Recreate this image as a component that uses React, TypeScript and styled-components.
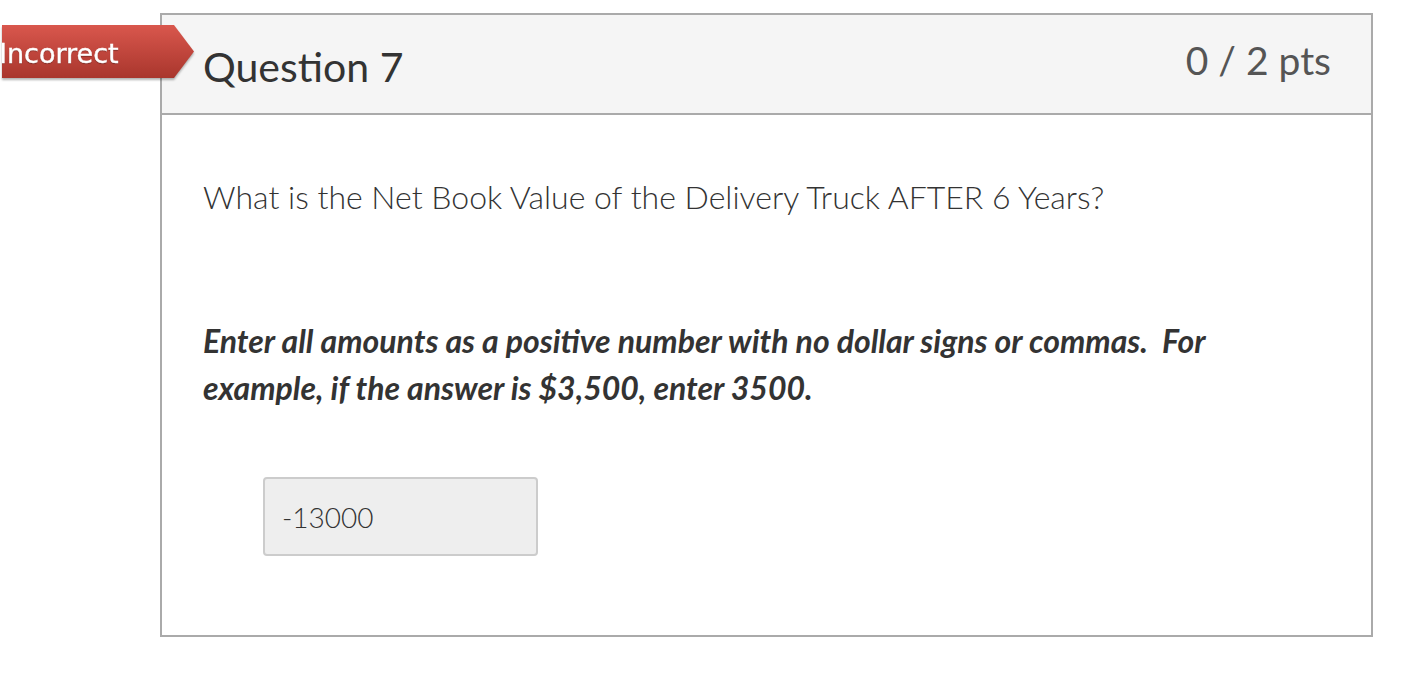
import React from "react";
import styled, { createGlobalStyle } from "styled-components";

const GlobalStyle = createGlobalStyle`
  html, body {
    margin: 0;
    padding: 0;
    background: #fff;
  }
  body {
    font-family: Lato, "Noto Sans", sans-serif;
    color: #333;
  }
`;

const Page = styled.div`
  padding: 13px 0 0 160px;
`;

const Card = styled.div`
  position: relative;
  width: 1213px;
  box-sizing: border-box;
  border: 2px solid #aaa;
`;

const RibbonShadow = styled.div`
  position: absolute;
  left: -160px;
  top: 10px;
  filter: drop-shadow(0 2px 1px rgba(0, 0, 0, 0.3));
`;

const Ribbon = styled.div`
  width: 192px;
  height: 53px;
  box-sizing: border-box;
  display: flex;
  align-items: center;
  padding-top: 3px;
  background: linear-gradient(#d9574d, #a9362d);
  clip-path: polygon(0 0, 172px 0, 100% 50%, 172px 100%, 0 100%);
  color: #fff;
  font-family: "DejaVu Sans", Verdana, sans-serif;
  font-size: 27px;
  text-indent: -3px;
  -webkit-text-stroke: 0.4px #fff;
  text-shadow: 0 1px 1px rgba(0, 0, 0, 0.35);
`;

const Header = styled.div`
  height: 100px;
  box-sizing: border-box;
  display: flex;
  justify-content: space-between;
  align-items: flex-start;
  padding: 0 40px 0 41px;
  background: #f5f5f5;
  border-bottom: 2px solid #aaa;
`;

const Title = styled.h2`
  margin: 27px 0 0;
  font-size: 41px;
  font-weight: 400;
  color: #333;
`;

const Points = styled.div`
  margin-top: 22px;
  font-size: 39px;
  font-weight: 400;
  color: #555;
`;

const Body = styled.div`
  padding: 60px 41px 79px;
`;

const Question = styled.p`
  margin: 0 0 98px;
  font-size: 32px;
  font-weight: 300;
  line-height: 44px;
`;

const Note = styled.p`
  margin: 0 0 66px;
  font-size: 32px;
  font-weight: 700;
  font-style: italic;
  line-height: 47px;
  white-space: pre-wrap;
  max-width: 1080px;
`;

const AnswerBox = styled.div`
  width: 275px;
  height: 79px;
  box-sizing: border-box;
  margin-left: 60px;
  display: flex;
  align-items: center;
  padding-left: 17px;
  background: #eee;
  border: 2px solid #ccc;
  border-radius: 4px;
  font-size: 28px;
  font-weight: 300;
  color: #333;
`;

export default function App() {
  return (
    <>
      <GlobalStyle />
      <Page>
        <Card>
          <RibbonShadow>
            <Ribbon>Incorrect</Ribbon>
          </RibbonShadow>
          <Header>
            <Title>Question 7</Title>
            <Points>0 / 2 pts</Points>
          </Header>
          <Body>
            <Question>What is the Net Book Value of the Delivery Truck AFTER 6 Years?</Question>
            <Note>
              {"Enter all amounts as a positive number with no dollar signs or commas.  For example, if the answer is $3,500, enter 3500."}
            </Note>
            <AnswerBox>-13000</AnswerBox>
          </Body>
        </Card>
      </Page>
    </>
  );
}
